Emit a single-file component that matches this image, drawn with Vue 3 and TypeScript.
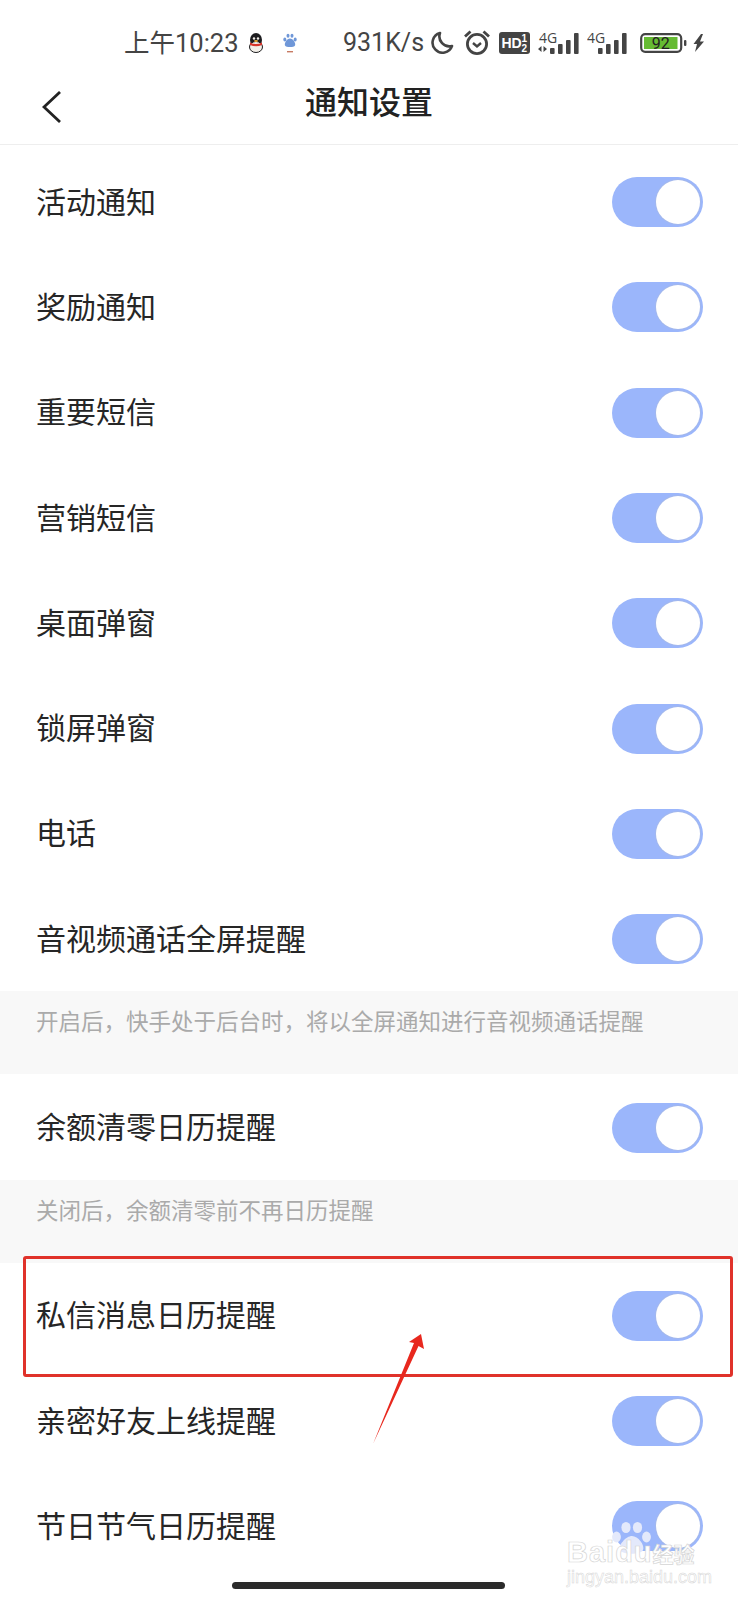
<script setup lang="ts">
type Row = { label: string; note?: string }

const rows: Row[] = [
  { label: '活动通知' },
  { label: '奖励通知' },
  { label: '重要短信' },
  { label: '营销短信' },
  { label: '桌面弹窗' },
  { label: '锁屏弹窗' },
  { label: '电话' },
  { label: '音视频通话全屏提醒', note: '开启后，快手处于后台时，将以全屏通知进行音视频通话提醒' },
  { label: '余额清零日历提醒', note: '关闭后，余额清零前不再日历提醒' },
  { label: '私信消息日历提醒' },
  { label: '亲密好友上线提醒' },
  { label: '节日节气日历提醒' },
]

const signalBars = [6, 10, 14, 21]
</script>

<template>
  <div class="page">
    <div class="status">
      <span class="time">上午10:23</span>
      <svg class="qq" width="16" height="20" viewBox="0 0 16 20">
        <ellipse cx="8" cy="7" rx="6" ry="7" fill="#1d1d1f" />
        <ellipse cx="8" cy="14" rx="6.5" ry="5.5" fill="#f4f0ea" stroke="#1d1d1f" stroke-width="1" />
        <path d="M2 9.5 Q8 12.5 14 9.5 L14 12 Q8 14.5 2 12 Z" fill="#d8352b" />
        <circle cx="6" cy="5.5" r="1.2" fill="#f4f0ea" />
        <circle cx="10" cy="5.5" r="1.2" fill="#f4f0ea" />
        <ellipse cx="8" cy="8" rx="2" ry="1" fill="#e9a52f" />
      </svg>
      <svg class="paw" width="14" height="20" viewBox="0 0 14 20">
        <ellipse cx="1.8" cy="6.5" rx="1.5" ry="2" fill="#6f97d8" />
        <ellipse cx="5" cy="2.8" rx="1.5" ry="2" fill="#6f97d8" />
        <ellipse cx="9" cy="2.8" rx="1.5" ry="2" fill="#6f97d8" />
        <ellipse cx="12.2" cy="6.5" rx="1.5" ry="2" fill="#6f97d8" />
        <path d="M7 5.5 C10 5.5 13 10 12 12.5 C11 14.5 3 14.5 2 12.5 C1 10 4 5.5 7 5.5 Z" fill="#6f97d8" />
        <rect x="4" y="18" width="6" height="1.4" fill="#c77a63" />
      </svg>
      <span class="speed">931K/s</span>
      <svg class="moon" width="23" height="23" viewBox="0 0 23 23">
        <path d="M9 2 A10 10 0 1 0 21 15 A10 10 0 0 1 9 2 Z" fill="none" stroke="#444" stroke-width="2.6" stroke-linejoin="round" />
      </svg>
      <svg class="alarm" width="28" height="25" viewBox="0 0 28 25">
        <circle cx="14" cy="14" r="9.6" fill="none" stroke="#444" stroke-width="2.8" />
        <path d="M10 13 L14 16.5 L18 13" fill="none" stroke="#444" stroke-width="2.4" />
        <path d="M2 6.5 L7.5 1.5 M26 6.5 L20.5 1.5" stroke="#444" stroke-width="2.8" />
      </svg>
      <svg class="hd" width="31" height="22" viewBox="0 0 31 22">
        <rect width="31" height="22" rx="3" fill="#444" />
        <text x="2.5" y="15.5" class="hd-text">HD</text>
        <text x="22.5" y="9.5" class="hd-sub">1</text>
        <text x="22.5" y="20" class="hd-sub">2</text>
      </svg>
      <svg class="sim" width="46" height="32" viewBox="0 -4 46 32">
        <text x="2" y="12" class="sim-text">4G</text>
        <path d="M1 18 L4.5 15 L4.5 21 Z M10 18 L6.5 15 L6.5 21 Z" fill="#444" />
        <rect v-for="(h, i) in signalBars" :key="i" :x="13 + i * 8" :y="23 - h" width="4.6" :height="h" rx="1" fill="#444" />
      </svg>
      <svg class="sim sim-two" width="44" height="32" viewBox="0 -4 44 32">
        <text x="0" y="12" class="sim-text">4G</text>
        <rect v-for="(h, i) in signalBars" :key="i" :x="11 + i * 8" :y="23 - h" width="4.6" :height="h" rx="1" fill="#444" />
      </svg>
      <svg class="battery" width="47" height="20" viewBox="0 0 47 20">
        <rect x="1.2" y="1.2" width="40" height="17.6" rx="4" fill="none" stroke="#444" stroke-width="2.2" />
        <rect x="4" y="4" width="33.5" height="12" fill="#66bb33" />
        <rect x="44" y="7" width="2.4" height="6" rx="1" fill="#444" />
        <text x="20.8" y="16" class="battery-text">92</text>
      </svg>
      <svg class="bolt" width="11" height="18" viewBox="0 0 11 18">
        <path d="M8 0 L0.5 10 L4 10 L2 18 L11 7.5 L7 7.5 L10 0 Z" fill="#444" />
      </svg>
    </div>

    <header class="nav">
      <svg class="back" width="20" height="32" viewBox="0 0 20 32">
        <path d="M18 1 L2 16 L18 31" fill="none" stroke="#222" stroke-width="2.8" />
      </svg>
      <h1 class="title">通知设置</h1>
    </header>

    <div class="list">
      <template v-for="row in rows" :key="row.label">
        <div class="row">
          <span class="label">{{ row.label }}</span>
          <span class="switch"><span class="thumb" /></span>
        </div>
        <p v-if="row.note" class="note">{{ row.note }}</p>
      </template>
    </div>

    <div class="home-bar" />

    <!-- screenshot annotation -->
    <div class="mark-box" />
    <svg class="mark-arrow" width="60" height="120" viewBox="0 0 60 120">
      <path d="M53 4 L56 19 L50.5 16 L5 114 L46 13 L41 12 Z" fill="#e8281e" />
    </svg>

    <div class="watermark">
      <svg class="wm-paw" width="40" height="34" viewBox="0 0 40 34">
        <ellipse cx="4.5" cy="15" rx="4.4" ry="5.4" />
        <ellipse cx="14" cy="5.5" rx="4.6" ry="5.5" />
        <ellipse cx="25.5" cy="5.5" rx="4.6" ry="5.5" />
        <ellipse cx="34.5" cy="15" rx="4.4" ry="5.4" />
        <path d="M20 14 C26 14 33 23 31 28 C29 33 10 33 8 28 C6 23 14 14 20 14 Z" />
      </svg>
      <div class="wm-brand">Bai<span class="wm-du">du</span><span class="wm-cn">经验</span></div>
      <div class="wm-url">jingyan.baidu.com</div>
    </div>
  </div>
</template>

<style>
html,
body {
  margin: 0;
  background: #fff;
}
</style>

<style scoped>
.page {
  position: relative;
  width: 738px;
  height: 1600px;
  overflow: hidden;
  background: #fff;
  font-family: "Noto Sans CJK SC", "Noto Sans", sans-serif;
  color: #222;
}

.status {
  height: 70px;
  display: flex;
  align-items: center;
  padding-top: 15px;
  padding-left: 124px;
  box-sizing: border-box;
  color: #444;
}

.status svg {
  flex: none;
}

.time {
  font-size: 25.5px;
  line-height: 30px;
  width: 124px;
  white-space: nowrap;
  font-family: Roboto, "Noto Sans CJK SC", sans-serif;
}

.speed {
  font-family: Roboto, sans-serif;
  font-size: 25px;
  line-height: 30px;
  margin-left: 46px;
  width: 88px;
  white-space: nowrap;
}

.paw {
  margin-left: 19px;
}

.alarm {
  margin-left: 9px;
}

.hd {
  margin-left: 8px;
}

.sim {
  margin-left: 7px;
}

.sim-two {
  margin-left: 4px;
}

.battery {
  margin-left: 9px;
}

.bolt {
  margin-left: 6px;
}

.hd-text {
  font: 700 14px "Liberation Sans", sans-serif;
  fill: #fff;
}

.hd-sub {
  font: 700 10px "Liberation Sans", sans-serif;
  fill: #fff;
}

.sim-text {
  font: 400 14px "Open Sans", sans-serif;
  fill: #444;
}

.battery-text {
  font: 400 16px Roboto, sans-serif;
  fill: #222;
  text-anchor: middle;
}

.nav {
  position: relative;
  height: 75px;
  display: flex;
  align-items: center;
  justify-content: center;
  border-bottom: 1px solid #eee;
  box-sizing: border-box;
  padding-bottom: 14px;
}

.back {
  position: absolute;
  left: 42px;
  top: 21px;
}

.title {
  margin: 0;
  font-size: 32px;
  line-height: 44px;
  font-weight: 500;
  color: #222;
}

.list {
  padding-top: 4px;
}

.row {
  height: 105.3px;
  display: flex;
  align-items: center;
  justify-content: space-between;
  padding: 0 35px 0 36px;
  background: #fff;
}

.label {
  font-size: 30px;
  line-height: 40px;
  margin-top: -4px;
  color: #262626;
}

.switch {
  position: relative;
  display: block;
  width: 91px;
  height: 50px;
  margin-top: 1px;
  border-radius: 25px;
  background: #9bb6fb;
}

.thumb {
  position: absolute;
  top: 3px;
  right: 3px;
  width: 44px;
  height: 44px;
  border-radius: 50%;
  background: #fff;
  box-shadow: 0 0 0 1px #a3b8ec;
}

.note {
  margin: 0;
  height: 83px;
  padding: 13px 36px 0;
  box-sizing: border-box;
  background: #f8f8f8;
  font-size: 22.5px;
  line-height: 32px;
  color: #aaa;
}

.home-bar {
  position: absolute;
  left: 232px;
  top: 1582px;
  width: 273px;
  height: 7px;
  border-radius: 4px;
  background: #2b2b2b;
}

.mark-box {
  position: absolute;
  left: 23px;
  top: 1256px;
  width: 710px;
  height: 121px;
  box-sizing: border-box;
  border: 3px solid #e0322a;
  border-radius: 3px;
}

.mark-arrow {
  position: absolute;
  left: 368px;
  top: 1330px;
}

.watermark {
  position: absolute;
  left: 567px;
  top: 1522px;
  width: 140px;
  height: 66px;
  color: #fff;
}

.wm-paw {
  position: absolute;
  left: 45px;
  top: 0;
  fill: #e4e9fb;
}

.wm-brand {
  position: absolute;
  left: 0;
  top: 15px;
  font: 700 29px/30px "Liberation Sans", sans-serif;
  letter-spacing: 1px;
  white-space: nowrap;
  color: #fff;
  -webkit-text-stroke: 0.7px #d5d5d5;
}

.wm-cn {
  font: 700 21px/30px "Noto Sans CJK SC", sans-serif;
  letter-spacing: 0;
}

.wm-url {
  position: absolute;
  left: 0;
  top: 45px;
  font: 400 18px/20px "Liberation Sans", sans-serif;
  white-space: nowrap;
  color: #fff;
  -webkit-text-stroke: 0.5px #d5d5d5;
}
</style>
